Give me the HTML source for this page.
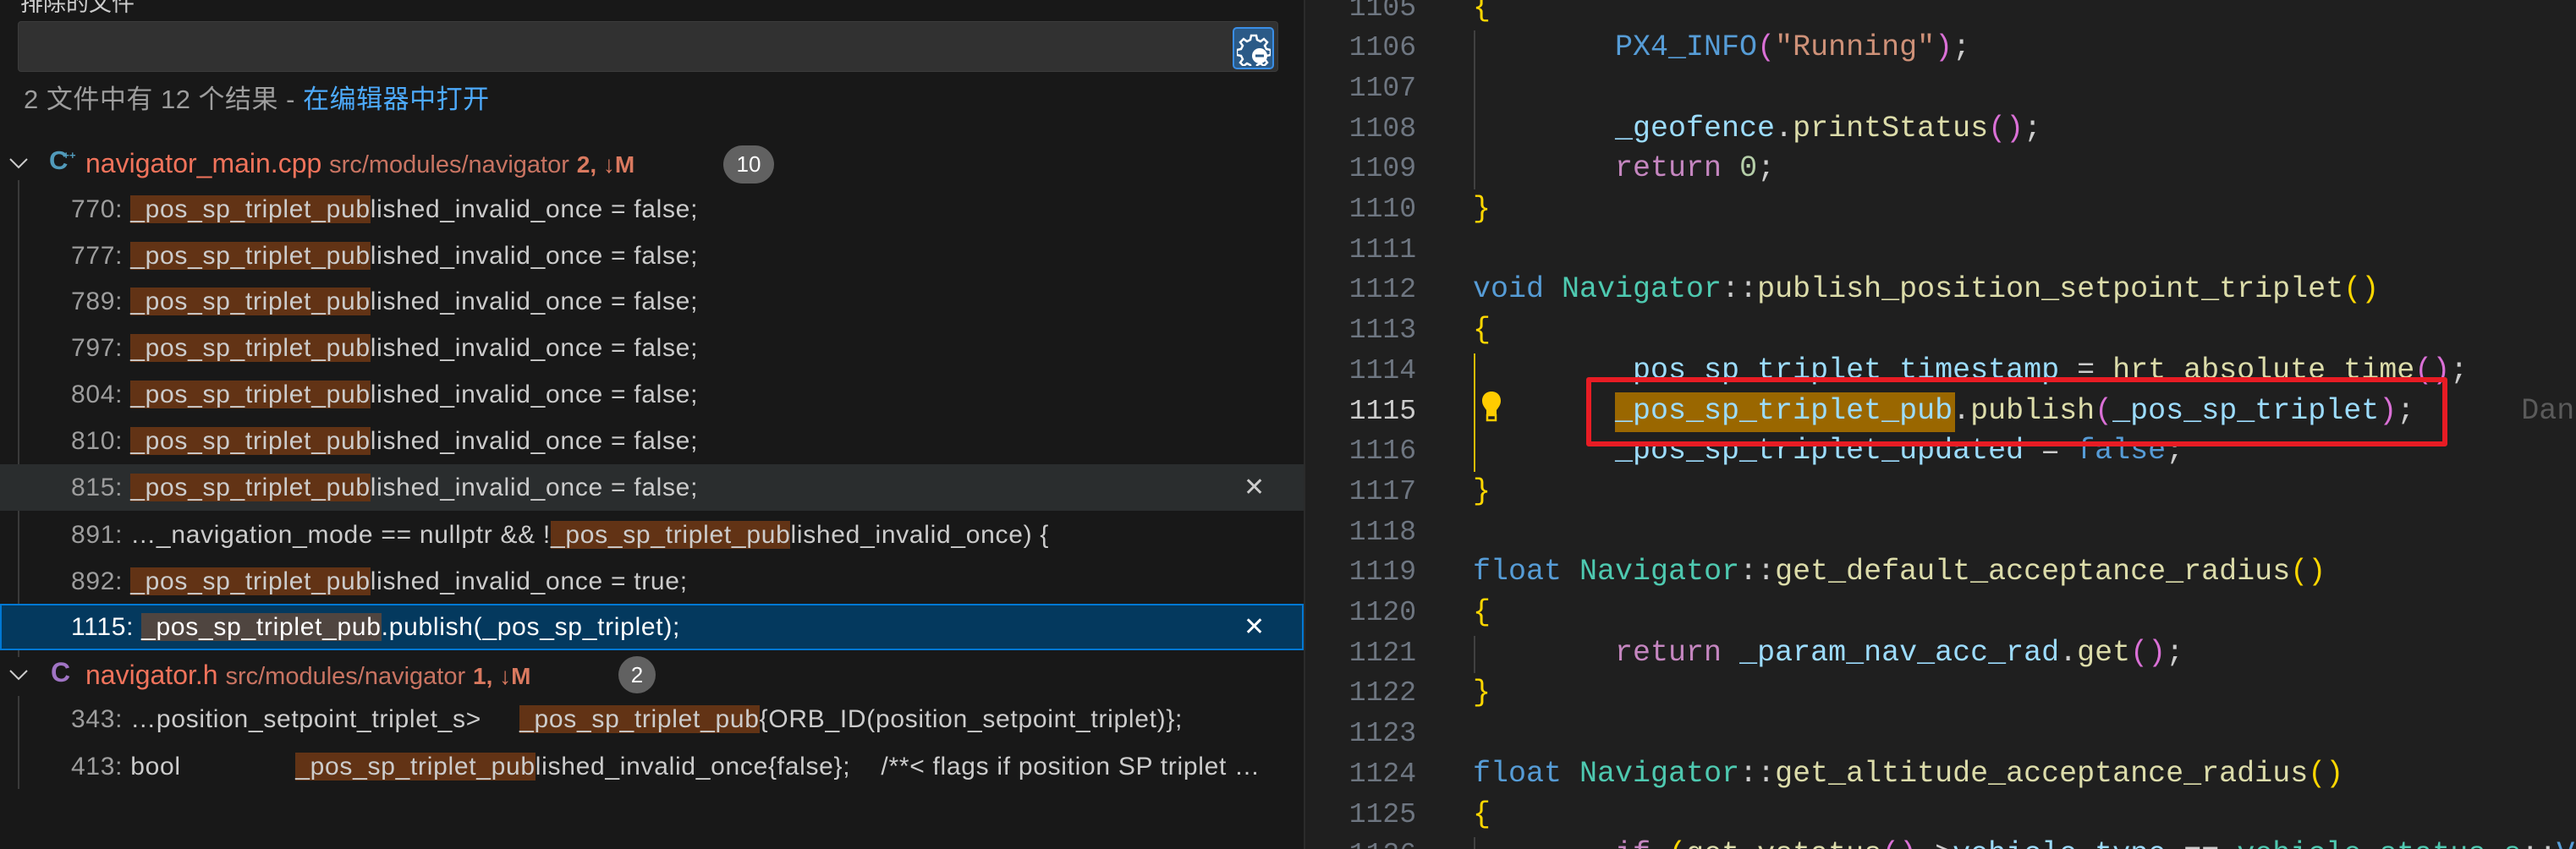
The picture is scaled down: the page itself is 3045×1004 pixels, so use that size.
<!DOCTYPE html>
<html><head><meta charset="utf-8"><style>
*{margin:0;padding:0;box-sizing:border-box}
html,body{width:3045px;height:1004px;overflow:hidden}
body{background:#1f1f1f;position:relative;font-family:"Liberation Sans","Noto Sans CJK SC",sans-serif}
#left{position:absolute;left:0;top:0;width:1543px;height:1004px;background:#181818;border-right:2px solid #2b2b2b;overflow:hidden}
#ed{position:absolute;left:1545px;top:0;width:1500px;height:1004px;overflow:hidden}
.abs{position:absolute;white-space:pre}
.row{position:absolute;left:0;width:1541px;height:55px;line-height:55px;font-size:30px;letter-spacing:0.7px;color:#cccccc;white-space:pre}
.row .t{position:absolute;left:84px;top:0}
.ln{color:#9d9d9d}
.h{background:#623315}
.x{position:absolute;left:1470px;top:0;font-size:30px;color:#cccccc}
.code{position:absolute;left:196px;font-family:"Liberation Mono","DejaVu Sans Mono",monospace;font-size:35px;white-space:pre;color:#cccccc;line-height:47.7px;height:47.7px}
.num{position:absolute;left:15px;width:114px;text-align:right;font-family:"Liberation Mono",monospace;font-size:33px;color:#6e7681;line-height:47.7px;height:47.7px}
.kw{color:#569cd6}.rt{color:#c586c0}.ty{color:#4ec9b0}.fn{color:#dcdcaa}.v{color:#9cdcfe}.s{color:#ce9178}.n{color:#b5cea8}.b{color:#ffd700}.p{color:#da70d6}
</style></head><body>
<div id="left">
 <div class="abs" style="left:24px;top:-18px;font-size:27px;color:#cccccc">排除的文件</div>
 <div class="abs" style="left:21px;top:25px;width:1490px;height:60px;background:#313131;border:1px solid #3c3c3c;border-radius:4px"></div>
 <div class="abs" style="left:1457px;top:32px;width:49px;height:50px;background:#2b5a87;border:2px solid #3a8ee6;border-radius:5px"></div>
 <svg class="abs" style="left:1462px;top:38px" width="40" height="40" viewBox="0 0 40 40"><path d="M17 4h6l1 5 4 2 4-3 4 4-3 4 2 4 5 1v6l-5 1-2 4 3 4-4 4-4-3-4 2-1 5h-6l-1-5-4-2-4 3-4-4 3-4-2-4-5-1v-6l5-1 2-4-3-4 4-4 4 3 4-2z" fill="none" stroke="#fff" stroke-width="2.5"/><circle cx="27" cy="28" r="9" fill="#fff"/><rect x="22" y="26.5" width="10" height="3" fill="#2b5a87"/></svg>
 <div class="abs" style="left:28px;top:97px;font-size:31px;line-height:42px;letter-spacing:0.5px;color:#9d9d9d">2 文件中有 12 个结果 - <span style="color:#4daafc">在编辑器中打开</span></div>

 <svg class="abs" style="left:10px;top:182px" width="24" height="20"><path d="M2 6l10 10 10-10" fill="none" stroke="#ccc" stroke-width="2"/></svg>
 <div class="abs" style="left:58px;top:172px;font-size:31px;font-weight:bold;color:#519aba">C<span style="font-size:13px;vertical-align:12px;margin-left:-6px">++</span></div>
 <div class="abs" style="left:101px;top:172px;font-size:32px;line-height:42px;color:#f1735b">navigator_main.cpp <span style="font-size:29px;color:#c97462">src/modules/navigator</span> <span style="font-size:28px;font-weight:bold;color:#d9795f">2, ↓M</span></div>
 <div class="abs" style="left:855px;top:172px;width:60px;height:45px;border-radius:23px;background:#616161;color:#fff;font-size:26px;line-height:45px;text-align:center">10</div>
 <div class="abs" style="left:21px;top:213px;width:2px;height:564px;background:#3a3a3a"></div>

 <div class="row" style="top:220px"><span class="t"><span class="ln">770: </span><span class="h">_pos_sp_triplet_pub</span>lished_invalid_once = false;</span></div>
 <div class="row" style="top:275px"><span class="t"><span class="ln">777: </span><span class="h">_pos_sp_triplet_pub</span>lished_invalid_once = false;</span></div>
 <div class="row" style="top:329px"><span class="t"><span class="ln">789: </span><span class="h">_pos_sp_triplet_pub</span>lished_invalid_once = false;</span></div>
 <div class="row" style="top:384px"><span class="t"><span class="ln">797: </span><span class="h">_pos_sp_triplet_pub</span>lished_invalid_once = false;</span></div>
 <div class="row" style="top:439px"><span class="t"><span class="ln">804: </span><span class="h">_pos_sp_triplet_pub</span>lished_invalid_once = false;</span></div>
 <div class="row" style="top:494px"><span class="t"><span class="ln">810: </span><span class="h">_pos_sp_triplet_pub</span>lished_invalid_once = false;</span></div>
 <div class="row" style="top:549px;background:#2a2d2e"><span class="t"><span class="ln">815: </span><span class="h">_pos_sp_triplet_pub</span>lished_invalid_once = false;</span><span class="x">✕</span></div>
 <div class="row" style="top:605px"><span class="t"><span class="ln">891: </span>…_navigation_mode == nullptr &amp;&amp; !<span class="h">_pos_sp_triplet_pub</span>lished_invalid_once) {</span></div>
 <div class="row" style="top:660px"><span class="t"><span class="ln">892: </span><span class="h">_pos_sp_triplet_pub</span>lished_invalid_once = true;</span></div>
 <div class="row" style="top:714px;height:55px;background:#04395e;border:2px solid #0078d4;line-height:51px"><span class="t" style="left:82px;color:#fff"><span>1115: </span><span style="background:#4f4540">_pos_sp_triplet_pub</span>.publish(_pos_sp_triplet);</span><span class="x" style="left:1468px;color:#fff">✕</span></div>

 <svg class="abs" style="left:10px;top:787px" width="24" height="20"><path d="M2 6l10 10 10-10" fill="none" stroke="#ccc" stroke-width="2"/></svg>
 <div class="abs" style="left:60px;top:777px;font-size:32px;font-weight:bold;color:#a074c4">C</div>
 <div class="abs" style="left:101px;top:777px;font-size:32px;line-height:42px;color:#f1735b">navigator.h <span style="font-size:29px;color:#c97462">src/modules/navigator</span> <span style="font-size:28px;font-weight:bold;color:#d9795f">1, ↓M</span></div>
 <div class="abs" style="left:731px;top:776px;width:44px;height:44px;border-radius:22px;background:#616161;color:#fff;font-size:26px;line-height:44px;text-align:center">2</div>
 <div class="abs" style="left:21px;top:823px;width:2px;height:110px;background:#3a3a3a"></div>
 <div class="row" style="top:823px"><span class="t"><span class="ln">343: </span>…position_setpoint_triplet_s&gt;     <span class="h">_pos_sp_triplet_pub</span>{ORB_ID(position_setpoint_triplet)};</span></div>
 <div class="row" style="top:879px"><span class="t"><span class="ln">413: </span>bool               <span class="h">_pos_sp_triplet_pub</span>lished_invalid_once{false};    /**&lt; flags if position SP triplet …</span></div>
</div>

<div id="ed">
<div class="num" style="top:-14.5px">1105</div>
<div class="num" style="top:33.2px">1106</div>
<div class="num" style="top:80.9px">1107</div>
<div class="num" style="top:128.6px">1108</div>
<div class="num" style="top:176.3px">1109</div>
<div class="num" style="top:224px">1110</div>
<div class="num" style="top:271.7px">1111</div>
<div class="num" style="top:319.4px">1112</div>
<div class="num" style="top:367.1px">1113</div>
<div class="num" style="top:414.8px">1114</div>
<div class="num" style="top:462.5px;color:#cccccc">1115</div>
<div class="num" style="top:510.2px">1116</div>
<div class="num" style="top:557.9px">1117</div>
<div class="num" style="top:605.6px">1118</div>
<div class="num" style="top:653.3px">1119</div>
<div class="num" style="top:701px">1120</div>
<div class="num" style="top:748.7px">1121</div>
<div class="num" style="top:796.4px">1122</div>
<div class="num" style="top:844.1px">1123</div>
<div class="num" style="top:891.8px">1124</div>
<div class="num" style="top:939.5px">1125</div>
<div class="num" style="top:987.2px">1126</div>

<div class="abs" style="left:197px;top:36px;width:2px;height:188px;background:#404040"></div>
<div class="abs" style="left:197px;top:418px;width:2px;height:140px;background:#d7ba00"></div>
<div class="abs" style="left:197px;top:752px;width:2px;height:44px;background:#404040"></div>
<div class="abs" style="left:197px;top:990px;width:2px;height:20px;background:#404040"></div>

<div class="abs" style="left:364px;top:464px;width:402px;height:47px;background:#9a6700"></div>

<div class="code" style="top:-14.5px"><span class="b">{</span></div>
<div class="code" style="top:33.2px">        <span class="kw">PX4_INFO</span><span class="p">(</span><span class="s">"Running"</span><span class="p">)</span>;</div>
<div class="code" style="top:128.6px">        <span class="v">_geofence</span>.<span class="fn">printStatus</span><span class="p">()</span>;</div>
<div class="code" style="top:176.3px">        <span class="rt">return</span> <span class="n">0</span>;</div>
<div class="code" style="top:224px"><span class="b">}</span></div>
<div class="code" style="top:319.4px"><span class="kw">void</span> <span class="ty">Navigator</span>::<span class="fn">publish_position_setpoint_triplet</span><span class="b">()</span></div>
<div class="code" style="top:367.1px"><span class="b">{</span></div>
<div class="code" style="top:414.8px">        <span class="v">_pos_sp_triplet_timestamp</span> = <span class="fn">hrt_absolute_time</span><span class="p">()</span>;</div>
<div class="code" style="top:462.5px">        <span class="v">_pos_sp_triplet_pub</span>.<span class="fn">publish</span><span class="p">(</span><span class="v">_pos_sp_triplet</span><span class="p">)</span>;      <span style="color:#5a5a5a">Dan</span></div>
<div class="code" style="top:510.2px">        <span class="v">_pos_sp_triplet_updated</span> = <span class="kw">false</span>;</div>
<div class="code" style="top:557.9px"><span class="b">}</span></div>
<div class="code" style="top:653.3px"><span class="kw">float</span> <span class="ty">Navigator</span>::<span class="fn">get_default_acceptance_radius</span><span class="b">()</span></div>
<div class="code" style="top:701px"><span class="b">{</span></div>
<div class="code" style="top:748.7px">        <span class="rt">return</span> <span class="v">_param_nav_acc_rad</span>.<span class="fn">get</span><span class="p">()</span>;</div>
<div class="code" style="top:796.4px"><span class="b">}</span></div>
<div class="code" style="top:891.8px"><span class="kw">float</span> <span class="ty">Navigator</span>::<span class="fn">get_altitude_acceptance_radius</span><span class="b">()</span></div>
<div class="code" style="top:939.5px"><span class="b">{</span></div>
<div class="code" style="top:987.2px">        <span class="rt">if</span> <span class="b">(</span><span class="fn">get_vstatus</span><span class="p">()</span>-&gt;<span class="v">vehicle_type</span> == <span class="ty">vehicle_status_s</span>::<span class="kw">V</span></div>

<svg class="abs" style="left:205px;top:462px" width="26" height="38" viewBox="0 0 26 38"><path d="M13 1C6 1 2 6 2 12c0 5 3 8 5 11v6h12v-6c2-3 5-6 5-11 0-6-4-11-11-11z" fill="#ffcc00"/><rect x="8" y="29" width="10" height="6" fill="none" stroke="#ffcc00" stroke-width="2.5"/></svg>

<div class="abs" style="left:330px;top:446px;width:1018px;height:82px;border:6px solid #e81c24;border-radius:3px"></div>
</div>
</body></html>
